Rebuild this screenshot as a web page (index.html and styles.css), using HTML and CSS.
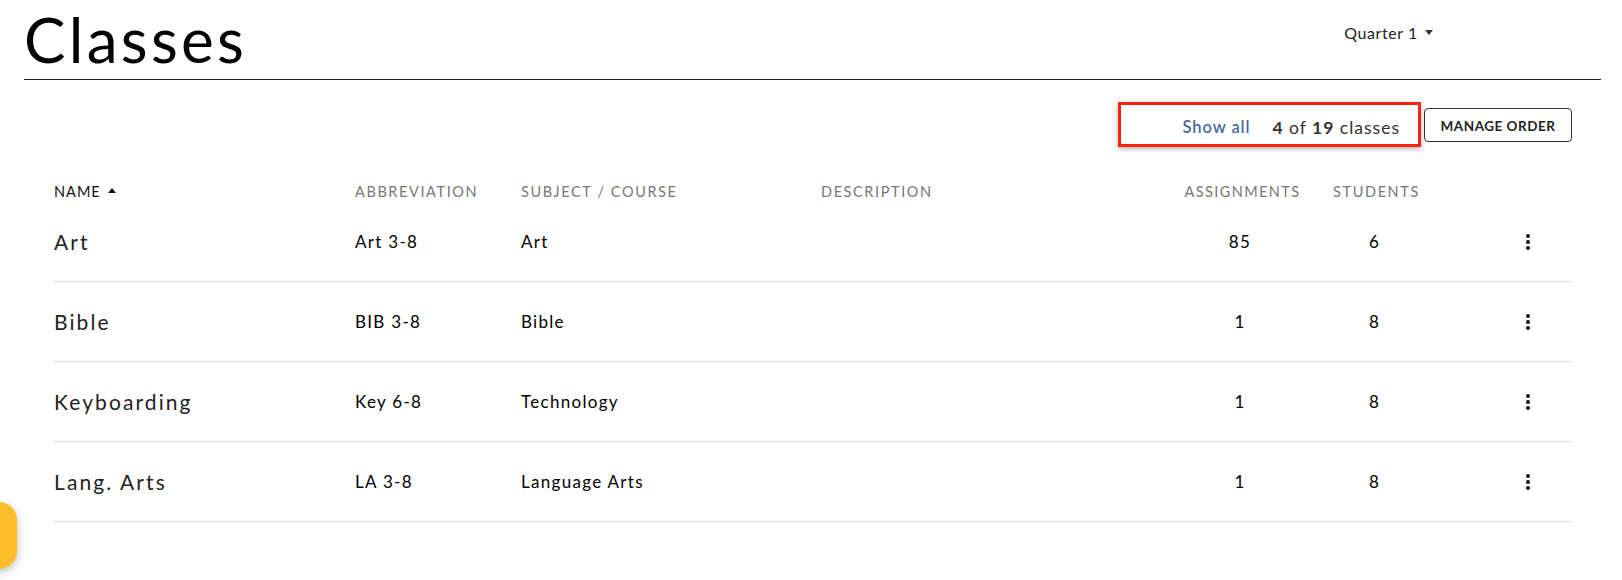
FILE: index.html
```html
<!DOCTYPE html>
<html>
<head>
<meta charset="utf-8">
<link rel="stylesheet" href="styles.css">
</head>
<body>
<div class="page">
  <header class="top">
    <h1 class="title">Classes</h1>
    <div class="term">Quarter 1 <span class="caret"></span></div>
  </header>
  <div class="toolbar">
    <div class="highlight">
      <a class="show-all">Show all</a>
      <span class="count"><b>4</b> of <b>19</b> classes</span>
    </div>
    <button class="manage">MANAGE ORDER</button>
  </div>
  <div class="table">
    <div class="row head">
      <div class="c-name">NAME <span class="sort"></span></div>
      <div>ABBREVIATION</div>
      <div>SUBJECT / COURSE</div>
      <div>DESCRIPTION</div>
      <div class="c-num">ASSIGNMENTS</div>
      <div class="c-num2">STUDENTS</div>
      <div></div>
    </div>
    <div class="row body">
      <div class="c-name name">Art</div>
      <div>Art 3-8</div>
      <div>Art</div>
      <div></div>
      <div class="c-num">85</div>
      <div class="c-num2">6</div>
      <div class="c-act"><span class="kebab"><i></i><i></i><i></i></span></div>
    </div>
    <div class="row body">
      <div class="c-name name">Bible</div>
      <div>BIB 3-8</div>
      <div>Bible</div>
      <div></div>
      <div class="c-num">1</div>
      <div class="c-num2">8</div>
      <div class="c-act"><span class="kebab"><i></i><i></i><i></i></span></div>
    </div>
    <div class="row body">
      <div class="c-name name">Keyboarding</div>
      <div>Key 6-8</div>
      <div>Technology</div>
      <div></div>
      <div class="c-num">1</div>
      <div class="c-num2">8</div>
      <div class="c-act"><span class="kebab"><i></i><i></i><i></i></span></div>
    </div>
    <div class="row body">
      <div class="c-name name">Lang. Arts</div>
      <div>LA 3-8</div>
      <div>Language Arts</div>
      <div></div>
      <div class="c-num">1</div>
      <div class="c-num2">8</div>
      <div class="c-act"><span class="kebab"><i></i><i></i><i></i></span></div>
    </div>
  </div>
</div>
<div class="fab"></div>
</body>
</html>
```
FILE: styles.css
```css
html, body {
  margin: 0;
  padding: 0;
  background: #fff;
  font-family: "Lato", "Noto Sans", sans-serif;
  color: #111;
  overflow: hidden;
}
.page {
  padding: 0 21px 0 24px;
}
.top {
  display: flex;
  align-items: flex-start;
  justify-content: space-between;
  border-bottom: 1px solid #222;
  height: 79px;
}
.title {
  margin: 0;
  font-weight: 400;
  font-size: 62px;
  line-height: 1;
  padding-top: 8px;
  letter-spacing: 3.3px;
  color: #000;
}
.term {
  margin: 23px 168px 0 0;
  font-size: 16px;
  letter-spacing: 0.6px;
  color: #222;
  display: flex;
  align-items: center;
  gap: 7px;
}
.caret {
  width: 0;
  height: 0;
  border-left: 4.5px solid transparent;
  border-right: 4.5px solid transparent;
  border-top: 5px solid #333;
}
.toolbar {
  display: flex;
  justify-content: flex-end;
  align-items: flex-start;
  gap: 3px;
  padding: 22px 29px 0 0;
}
.highlight {
  box-sizing: border-box;
  width: 303px;
  height: 45px;
  border: 3px solid #fa2310;
  box-shadow: 0 2px 5px rgba(0,0,0,0.3);
  display: flex;
  align-items: center;
  justify-content: flex-end;
  gap: 22px;
  padding: 5px 18px 0 0;
  font-size: 17.5px;
}
.show-all {
  color: #4a6a9e;
  font-weight: 600;
  font-size: 16.5px;
  letter-spacing: 0.9px;
}
.count {
  color: #333;
  letter-spacing: 1px;
}
.count b { font-weight: 700; }
.manage {
  box-sizing: border-box;
  width: 148px;
  height: 34px;
  margin-top: 6px;
  background: #fff;
  border: 1px solid #333;
  border-radius: 4px;
  font-family: "Lato", sans-serif;
  font-weight: 700;
  font-size: 13.5px;
  letter-spacing: 0.5px;
  color: #222;
  padding: 1px 0 0;
}
.table {
  margin: 33px 29px 0 30px;
}
.row {
  display: grid;
  grid-template-columns: 301px 166px 300px 362px 150px 87px 1fr;
  align-items: center;
}
.head {
  height: 22px;
  font-size: 14.5px;
  color: #777;
  letter-spacing: 1.6px;
}
.head .c-name { color: #111; display: flex; align-items: center; gap: 7px; letter-spacing: 1px; }
.sort {
  width: 0;
  height: 0;
  border-left: 4.5px solid transparent;
  border-right: 4.5px solid transparent;
  border-bottom: 5px solid #111;
  margin-top: -2px;
}
.body {
  box-sizing: border-box;
  height: 80px;
  border-bottom: 1px solid #ddd;
  font-size: 17px;
  color: #000;
  letter-spacing: 1.3px;
}
.body .name {
  font-size: 21px;
  color: #222;
  letter-spacing: 2.1px;
}
.c-num { text-align: center; padding-right: 31px; }
.c-num2 { text-align: center; }
.head .c-num { padding-right: 31px; letter-spacing: 1.4px; }
.body .c-num { padding-right: 36px; }
.body .c-num2 { padding-right: 4px; }
.c-act { display: flex; justify-content: flex-end; padding-right: 42px; }
.kebab {
  display: flex;
  flex-direction: column;
  gap: 2px;
}
.kebab i {
  display: block;
  width: 4px;
  height: 4px;
  border-radius: 50%;
  background: #111;
}
.fab {
  position: fixed;
  left: -50px;
  top: 502px;
  width: 67px;
  height: 67px;
  border-radius: 18px;
  background: #ffbd2c;
  box-shadow: 0 3px 10px rgba(0,0,0,0.25);
}
```
